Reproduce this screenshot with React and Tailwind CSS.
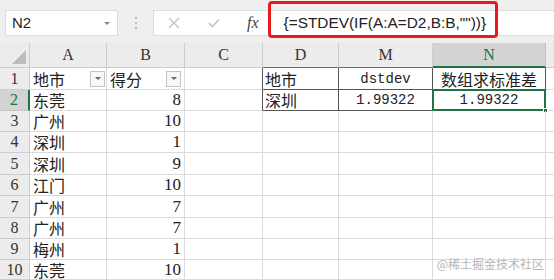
import React from 'react';

const cols = [
  { key: 'A', w: 'w-[77px]' },
  { key: 'B', w: 'w-[78px]' },
  { key: 'C', w: 'w-[78px]' },
  { key: 'D', w: 'w-[76px]' },
  { key: 'M', w: 'w-[94px]' },
  { key: 'N', w: 'w-[113px]' },
];

const rows = [
  { n: 1, h: 'h-[22px]', a: '地市', b: '得分', d: '地市', m: 'dstdev', nn: '数组求标准差', head: true },
  { n: 2, h: 'h-[21px]', a: '东莞', b: '8', d: '深圳', m: '1.99322', nn: '1.99322' },
  { n: 3, h: 'h-[21px]', a: '广州', b: '10' },
  { n: 4, h: 'h-[21px]', a: '深圳', b: '1' },
  { n: 5, h: 'h-[22px]', a: '深圳', b: '9' },
  { n: 6, h: 'h-[21px]', a: '江门', b: '10' },
  { n: 7, h: 'h-[22px]', a: '广州', b: '7' },
  { n: 8, h: 'h-[21px]', a: '广州', b: '7' },
  { n: 9, h: 'h-[21px]', a: '梅州', b: '1' },
  { n: 10, h: 'h-[20px]', a: '东莞', b: '10' },
];

const cjk = "font-['Noto_Sans_CJK_SC',sans-serif]";
const serif = "font-['Liberation_Serif','Noto_Sans_CJK_SC',serif]";
const mono = "font-['Liberation_Mono',monospace]";

function FilterButton() {
  return (
    <div className="flex h-[16px] w-[15px] items-center justify-center border border-[#c4c4c4] bg-[#f8f8f8]">
      <div className="h-0 w-0 border-x-[3px] border-t-[3px] border-x-transparent border-t-[#666]" />
    </div>
  );
}

function Toolbar() {
  return (
    <div className="relative flex h-[43px] items-start bg-[#efefef] pt-[10px]">
      <div className="ml-[5px] flex h-[26px] w-[113px] items-center justify-between border border-[#dcdcdc] bg-white pl-[6px] pr-[7px]">
        <span className="font-['Liberation_Sans',sans-serif] text-[15px] text-[#222]">N2</span>
        <div className="h-0 w-0 border-x-[3px] border-t-[3px] border-x-transparent border-t-[#888]" />
      </div>
      <div className="flex h-[26px] w-[35px] flex-col items-center justify-center gap-[3px]">
        <div className="h-[2px] w-[2px] rounded-full bg-[#aaa]" />
        <div className="h-[2px] w-[2px] rounded-full bg-[#aaa]" />
        <div className="h-[2px] w-[2px] rounded-full bg-[#aaa]" />
      </div>
      <div className="flex h-[26px] flex-1 items-center border border-r-0 border-[#dcdcdc] bg-white">
        <svg className="ml-[14px]" width="12" height="12" viewBox="0 0 12 12">
          <path d="M1 1 L11 11 M11 1 L1 11" stroke="#c2c2c2" strokeWidth="1.3" fill="none" />
        </svg>
        <svg className="ml-[28px]" width="12" height="10" viewBox="0 0 12 10">
          <path d="M1 5 L4.5 8.5 L11 1.5" stroke="#c2c2c2" strokeWidth="1.6" fill="none" />
        </svg>
        <span className="ml-[27px] font-['Liberation_Serif',serif] text-[16px] italic text-[#444]">fx</span>
        <span className="ml-[25px] font-['Liberation_Sans',sans-serif] text-[15.4px] text-[#222]">
          {'{=STDEV(IF(A:A=D2,B:B,""))}'}
        </span>
      </div>
      <div className="absolute left-[268px] top-[1px] h-[37px] w-[230px] rounded-[4px] border-[3px] border-[#e8191f]" />
    </div>
  );
}

function HeaderRow() {
  return (
    <div className="flex h-[25px] bg-[#ececec]">
      <div className="relative w-[30px] border-r border-b border-[#cdcdcd]">
        <div className="absolute bottom-[3px] right-[3px] h-0 w-0 border-b-[14px] border-l-[14px] border-l-transparent border-b-[#bdbdbd]" />
      </div>
      {cols.map((c) => {
        const sel = c.key === 'N';
        const dark = c.key === 'D' || c.key === 'M';
        return (
          <div
            key={c.key}
            className={`${c.w} flex items-center justify-center border-r ${serif} text-[16px] ${
              sel
                ? 'border-b-2 border-r-[#bfbfbf] border-b-[#217346] bg-[#d3d3d3] text-[#217346]'
                : dark
                ? 'border-b border-r-[#cdcdcd] border-b-[#6a6a6a] text-[#333]'
                : 'border-b border-[#cdcdcd] text-[#333]'
            }`}
          >
            {c.key}
          </div>
        );
      })}
      <div className="flex-1 border-b border-[#cdcdcd]" />
    </div>
  );
}

function Row({ r }) {
  const sel = r.n === 2;
  const inTable = r.n <= 2;
  const grid = 'border-[#dadada]';
  const darkB = 'border-b-[#555]';
  return (
    <div className={`flex ${r.h} bg-white`}>
      <div
        className={`flex w-[30px] items-center justify-center border-b ${serif} text-[16px] leading-[18px] ${
          sel
            ? 'border-r-2 border-r-[#217346] border-b-[#c6c6c6] bg-[#d3d3d3] text-[#217346]'
            : 'border-r border-[#cdcdcd] bg-[#ececec] text-[#333]'
        }`}
      >
        {r.n}
      </div>
      <div className={`flex w-[77px] items-center justify-between border-r border-b ${grid} pl-[3px] pr-[1px]`}>
        <span className={`${cjk} text-[16px] leading-[18px] text-[#222]`}>{r.a}</span>
        {r.head && <FilterButton />}
      </div>
      <div
        className={`flex w-[78px] items-center border-r border-b ${grid} pl-[3px] pr-[3px] ${
          r.head ? 'justify-between' : 'justify-end'
        }`}
      >
        {r.head ? (
          <>
            <span className={`${cjk} text-[16px] leading-[18px] text-[#222]`}>{r.b}</span>
            <FilterButton />
          </>
        ) : (
          <span className={`${serif} text-[17px] leading-[18px] text-[#222]`}>{r.b}</span>
        )}
      </div>
      <div className={`w-[78px] border-r border-b ${grid} ${inTable ? 'border-r-[#555]' : ''}`} />
      <div
        className={`flex w-[76px] items-center border-r border-b ${grid} pl-[2px] ${
          inTable ? `border-r-[#555] ${darkB}` : ''
        }`}
      >
        <span className={`${cjk} text-[16px] leading-[18px] text-[#222]`}>{r.d}</span>
      </div>
      <div
        className={`flex w-[94px] items-center justify-center border-r border-b ${grid} ${
          inTable ? `border-r-[#555] ${darkB}` : ''
        }`}
      >
        <span className={`${mono} text-[14px] leading-[18px] text-[#222]`}>{r.m}</span>
      </div>
      <div
        className={`relative flex w-[113px] items-center justify-center border-r border-b ${grid} ${
          r.n === 1 ? 'border-r-[#555] border-b-[#555]' : ''
        }`}
      >
        {r.head ? (
          <span className={`${cjk} text-[16px] leading-[18px] text-[#222]`}>{r.nn}</span>
        ) : (
          <span className={`${mono} text-[14px] leading-[18px] text-[#222]`}>{r.nn}</span>
        )}
        {sel && (
          <>
            <div className="absolute -left-px -top-px bottom-[-1px] right-[-1px] border-2 border-[#217346]" />
            <div className="absolute bottom-[-3px] right-[-3px] h-[5px] w-[5px] border border-white bg-[#217346]" />
          </>
        )}
      </div>
      <div className={`flex-1 border-b ${grid}`} />
    </div>
  );
}

export default function App() {
  return (
    <div className="relative h-[280px] w-[554px] overflow-hidden bg-white">
      <Toolbar />
      <HeaderRow />
      {rows.map((r) => (
        <Row key={r.n} r={r} />
      ))}
      <div className={`absolute bottom-[9px] right-[10px] ${cjk} text-[12px] leading-[14px] text-[#b5b5b5] [text-shadow:0_0_2px_#fff]`}>
        @稀土掘金技术社区
      </div>
    </div>
  );
}
